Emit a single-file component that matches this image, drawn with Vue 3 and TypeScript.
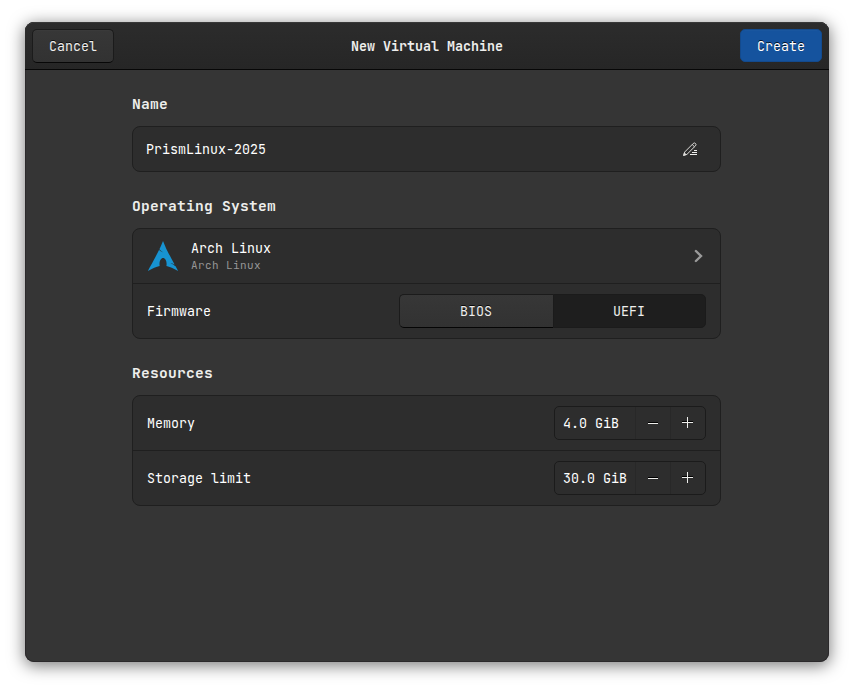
<script setup lang="ts">
import { ref } from 'vue'

interface Resource {
  label: string
  value: number
  step: number
}

const name = ref('PrismLinux-2025')
const firmwares = ['BIOS', 'UEFI']
const firmware = ref('UEFI')
const resources = ref<Resource[]>([
  { label: 'Memory', value: 4, step: 0.5 },
  { label: 'Storage limit', value: 30, step: 1 },
])

function change(item: Resource, direction: number) {
  item.value = Math.max(item.step, item.value + direction * item.step)
}
</script>

<template>
  <div class="desktop">
    <div class="window">
      <header class="bar">
        <button class="btn">Cancel</button>
        <h1 class="title">New Virtual Machine</h1>
        <button class="btn suggested">Create</button>
      </header>
      <main class="content">
        <section>
          <h2 class="heading">Name</h2>
          <div class="card">
            <div class="row name-row">
              <span class="name">{{ name }}</span>
              <svg class="edit" width="16" height="16" viewBox="0 0 16 16" fill="none">
                <path d="M1.700 14.400 2.600 11.100 11.200 2.500Q12.400 1.400 13.500 2.500T13.500 4.800L4.900 13.400ZM10.200 3.500l2.300 2.300" stroke="#deddda" />
                <path d="M1 15l1.200-3.800 2.600 2.600z" fill="#deddda" />
                <path d="M12 9.500h3M10 11.500h5M8 13.500h7" stroke="#eeeeec" />
              </svg>
            </div>
          </div>
        </section>

        <section>
          <h2 class="heading">Operating System</h2>
          <div class="card">
            <div class="row">
              <svg class="arch" width="32" height="32" viewBox="0 0 32 32">
                <path fill="#1793d1" d="M16 .9C14.7 4.2 13.8 6.3 12.4 9.3c.9.9 2 1.9 3.8 3.1-1.9-.8-3.2-1.6-4.2-2.4C10 14.1 6.900 20 .9 30.900c4.700-2.700 8.400-4.400 11.800-5-.2-.6-.2-1.300-.2-2 0-3.300 1.700-5.900 3.600-5.900s3.500 2.600 3.500 5.900c0 .7-.1 1.400-.2 2 3.400.6 7 2.300 11.700 5l-2.500-4.600c-1.200-.9-2.500-2.100-5.100-3.400 1.800.4 3.100 1 4.100 1.600C19.600 10 18.800 7.700 16 .9Z" />
              </svg>
              <div class="os">
                <span class="os-name">Arch Linux</span>
                <span class="os-sub">Arch Linux</span>
              </div>
              <svg class="chevron" width="16" height="16" viewBox="0 0 16 16">
                <path d="M5.900 3 11 8l-5.100 5" fill="none" stroke="#9a9a9a" stroke-width="2.400" stroke-linecap="round" />
              </svg>
            </div>
            <div class="row">
              <span>Firmware</span>
              <div class="segmented">
                <button
                  v-for="item in firmwares"
                  :key="item"
                  class="segment"
                  :class="{ active: firmware === item }"
                  @click="firmware = item"
                >{{ item }}</button>
              </div>
            </div>
          </div>
        </section>

        <section>
          <h2 class="heading">Resources</h2>
          <div class="card">
            <div v-for="item in resources" :key="item.label" class="row">
              <span>{{ item.label }}</span>
              <div class="spin">
                <span class="value">{{ item.value.toFixed(1) }} GiB</span>
                <button class="step" aria-label="Decrease" @click="change(item, -1)">
                  <svg width="16" height="16" viewBox="0 0 16 16"><path d="M3 7.500h10" stroke="#000" /><path d="M3 8.500h10" stroke="#eeeeec" /></svg>
                </button>
                <button class="step" aria-label="Increase" @click="change(item, 1)">
                  <svg width="16" height="16" viewBox="0 0 16 16"><path d="M2 6.500h11" stroke="#000" /><path d="M2 7.500h11M7.500 2v11" stroke="#eeeeec" /></svg>
                </button>
              </div>
            </div>
          </div>
        </section>
      </main>
    </div>
  </div>
</template>

<style>
body {
  background: #fff;
}
</style>

<style scoped>
* {
  box-sizing: border-box;
}
.desktop {
  height: 690px;
  padding: 22px 25px 28px;
  overflow: hidden;
  font-family: "JetBrains Mono", "DejaVu Sans Mono", monospace;
  font-size: 13.333px;
  color: #fff;
}
.window {
  height: 640px;
  border-radius: 9px;
  background: #353535;
  box-shadow: 0 3px 16px 1px rgba(0, 0, 0, 0.5), inset 0 0 0 1px #2b292b;
}
.bar {
  display: flex;
  align-items: center;
  justify-content: space-between;
  height: 48px;
  padding: 0 7px;
  border-bottom: 1px solid #070707;
  border-radius: 9px 9px 0 0;
  background: linear-gradient(#2c2c2c, #262626);
  box-shadow: inset 0 1px #383838;
}
button {
  margin: 0;
  padding: 0;
  font: inherit;
  color: #eeeeec;
}
.btn {
  width: 82px;
  height: 34px;
  border: 1px solid #1b1b1b;
  border-bottom-color: #070707;
  border-radius: 5px;
  background: linear-gradient(#373737, #323232);
  box-shadow: inset 0 1px rgba(255, 255, 255, 0.02);
  text-shadow: 0 -1px rgba(0, 0, 0, 0.8);
}
.suggested {
  height: 33px;
  margin-bottom: 1px;
  padding-top: 2px;
  border-color: #134a8d;
  background: #15539e;
  color: #fff;
}
.title {
  margin: 0;
  font-size: 13.333px;
  font-weight: 700;
  color: #eeeeec;
}
.content {
  display: flex;
  flex-direction: column;
  gap: 23px;
  width: 589px;
  margin: 0 0 0 107px;
  padding-top: 23px;
}
.heading {
  height: 33px;
  margin: 0;
  font-size: 14.6px;
  line-height: 21px;
  letter-spacing: 0.24px;
  color: #eeeeec;
}
.card {
  border: 1px solid #1f1f1f;
  border-radius: 8px;
  background: #2d2d2d;
}
.row {
  display: flex;
  align-items: center;
  justify-content: space-between;
  height: 54px;
  padding: 0 14px;
}
.row + .row {
  height: 55px;
  border-top: 1px solid #1f1f1f;
}
.name-row {
  height: 44px;
  padding: 0 22px 0 13px;
}
.arch {
  margin-right: 12px;
}
.os {
  display: flex;
  flex: 1;
  flex-direction: column;
}
.os-name {
  line-height: 18px;
}
.os-sub {
  font-size: 11px;
  line-height: 16px;
  letter-spacing: 0.4px;
  color: #969696;
}
.segmented {
  display: grid;
  grid-template-columns: 154px 153px;
  height: 34px;
}
.segment {
  padding-right: 1px;
  border: 1px solid #1b1b1b;
  border-right: 0;
  border-bottom-color: #050505;
  border-radius: 5px 0 0 5px;
  background: linear-gradient(#373737, #323232);
  text-shadow: 0 -1px rgba(0, 0, 0, 0.8);
}
.segment:last-child {
  border-right: 1px solid #1b1b1b;
  border-radius: 0 5px 5px 0;
}
.segment.active {
  border-color: #1b1b1b;
  background: #1e1e1e;
  text-shadow: none;
}
.spin {
  display: flex;
  width: 152px;
  height: 34px;
  border: 1px solid #1b1b1b;
  border-radius: 5px;
}
.value {
  flex: 1;
  padding-left: 8px;
  line-height: 32px;
  white-space: nowrap;
}
.step {
  display: flex;
  align-items: center;
  justify-content: center;
  width: 35px;
  border: 0;
  border-left: 1px solid #282828;
  background: none;
}
</style>
